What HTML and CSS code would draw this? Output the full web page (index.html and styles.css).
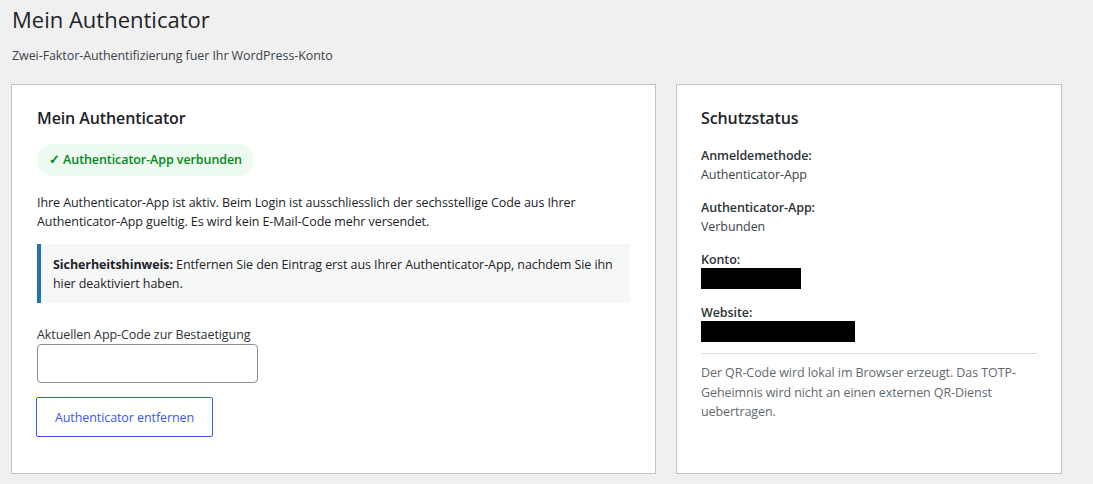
FILE: index.html
```html
<!DOCTYPE html>
<html lang="de">
<head>
    <meta charset="UTF-8">
    <meta name="viewport" content="width=device-width, initial-scale=1.0">
    <title>Mein Authenticator</title>
    <link rel="stylesheet" href="styles.css">
</head>
<body>

<div class="wrap">
    <h1 class="page-title">Mein Authenticator</h1>
    <p class="page-desc">Zwei-Faktor-Authentifizierung fuer Ihr WordPress-Konto</p>

    <div class="layout">
        <div class="card main-card">
            <h2>Mein Authenticator</h2>
            <span class="badge">&#10003; Authenticator-App verbunden</span>

            <p class="intro">Ihre Authenticator-App ist aktiv. Beim Login ist ausschliesslich der sechsstellige Code aus Ihrer Authenticator-App gueltig. Es wird kein E-Mail-Code mehr versendet.</p>

            <div class="notice">
                <p><strong>Sicherheitshinweis:</strong> Entfernen Sie den Eintrag erst aus Ihrer Authenticator-App, nachdem Sie ihn hier deaktiviert haben.</p>
            </div>

            <form class="remove-form" onsubmit="return false;">
                <label for="app-code">Aktuellen App-Code zur Bestaetigung</label>
                <input type="text" id="app-code" class="code-input" autocomplete="off">
                <button type="submit" class="remove-button">Authenticator entfernen</button>
            </form>
        </div>

        <div class="card side-card">
            <h2>Schutzstatus</h2>

            <div class="status-item">
                <div class="status-label">Anmeldemethode:</div>
                <div class="status-value">Authenticator-App</div>
            </div>
            <div class="status-item">
                <div class="status-label">Authenticator-App:</div>
                <div class="status-value">Verbunden</div>
            </div>
            <div class="status-item">
                <div class="status-label">Konto:</div>
                <div class="redacted account"></div>
            </div>
            <div class="status-item">
                <div class="status-label">Website:</div>
                <div class="redacted site"></div>
            </div>

            <hr class="divider">

            <p class="side-note">Der QR-Code wird lokal im Browser erzeugt. Das TOTP-Geheimnis wird nicht an einen externen QR-Dienst uebertragen.</p>
        </div>
    </div>
</div>

</body>
</html>
```

FILE: styles.css
```css
body {
    margin: 0;
    background-color: #f0f0f1;
    color: #1d2327;
    font-family: "Open Sans", "Noto Sans", Arial, sans-serif;
    font-size: 12.5px;
    letter-spacing: -0.08px;
    line-height: 19px;
}
.wrap {
    padding: 4px 32px 0 11px;
}
.page-title {
    margin: 0 0 0 1px;
    font-size: 22px;
    font-weight: 400;
    line-height: 30px;
    letter-spacing: 0;
}
.page-desc {
    margin: 12px 0 19px 1px;
    color: #3c434a;
}
.layout {
    display: grid;
    grid-template-columns: 645px 386px;
    gap: 20px;
    align-items: stretch;
}
.card {
    background-color: white;
    border: 1px solid #c3c4c7;
    box-shadow: 0 1px 1px rgba(0, 0, 0, 0.04);
    padding: 22px 24px 36px 25px;
}
.card h2 {
    margin: 0 0 15px;
    font-size: 16px;
    font-weight: 600;
    line-height: 22px;
    letter-spacing: -0.1px;
}
.badge {
    display: inline-block;
    padding: 7px 12px;
    border-radius: 16px;
    background-color: #edfaef;
    color: #008a20;
    font-weight: 600;
    line-height: 18px;
}
.intro {
    margin: 17px 0 13px;
}
.notice {
    background-color: #f6f7f7;
    border-left: 4px solid #2271b1;
    padding: 11px 16px 10px 12px;
    margin-right: 1px;
}
.notice p {
    margin: 0;
}
.remove-form {
    margin-top: 22px;
}
.remove-form label {
    display: block;
    line-height: 19px;
    color: #2c3338;
}
.code-input {
    display: block;
    box-sizing: border-box;
    width: 221px;
    height: 39px;
    margin: 0;
    border: 1px solid #8c8f94;
    border-radius: 4px;
    background: white;
}
.remove-button {
    display: block;
    box-sizing: border-box;
    width: 177px;
    height: 40px;
    margin-top: 14px;
    margin-left: -1px;
    padding: 0 12px;
    background-color: white;
    color: #3858e9;
    border: 1px solid #3858e9;
    border-radius: 2px;
    font-family: inherit;
    font-size: 12.5px;
    letter-spacing: -0.08px;
    cursor: pointer;
}
.side-card h2 {
    margin-bottom: 17px;
}
.side-card {
    padding-left: 24px;
}
.status-item {
    margin-bottom: 14px;
}
.status-label {
    font-weight: 600;
    color: #2c3338;
}
.status-value {
    color: #3c434a;
}
.redacted {
    height: 21px;
    margin-top: -1px;
    background-color: black;
}
.redacted.account {
    width: 100px;
}
.redacted.site {
    width: 154px;
}
.divider {
    border: 0;
    border-top: 1px solid #dcdcde;
    margin: -3px 0 9px;
}
.side-note {
    margin: 0;
    color: #646970;
    line-height: 19.5px;
}
```
